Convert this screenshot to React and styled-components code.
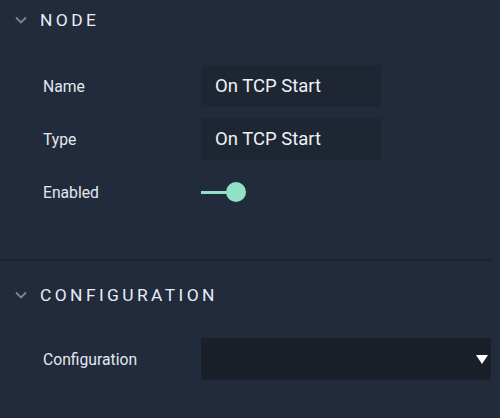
import React from 'react';
import styled, { createGlobalStyle } from 'styled-components';

const GlobalStyle = createGlobalStyle`
  html, body {
    margin: 0;
    padding: 0;
    background: #222b3b;
  }
  body {
    font-family: Roboto, "Noto Sans", sans-serif;
    width: 500px;
    height: 418px;
    overflow: hidden;
  }
`;

const Panel = styled.div`
  width: 500px;
  height: 418px;
  background: #222b3b;
  color: #e3e8ef;
`;

const Section = styled.section`
  padding-top: ${p => p.top || 0}px;
  padding-bottom: ${p => p.bottom || 0}px;
`;

const Header = styled.div`
  display: flex;
  align-items: center;
  height: 40px;
  padding-left: 15px;
  gap: 13px;
`;

const Title = styled.span`
  font-size: 17.4px;
  font-weight: 400;
  letter-spacing: 3.4px;
  color: #e6edf7;
  text-transform: uppercase;
`;

const Body = styled.div`
  display: flex;
  flex-direction: column;
  gap: 11px;
  padding-top: ${p => p.top}px;
`;

const Row = styled.div`
  display: grid;
  grid-template-columns: 158px ${p => p.wide ? '290px' : '180px'};
  align-items: center;
  height: 42px;
  padding-left: 43px;
`;

const Label = styled.span`
  font-size: 15.7px;
  color: #e3e8ef;
  padding-top: 1px;
`;

const Field = styled.div`
  height: 42px;
  display: flex;
  align-items: center;
  padding-left: 14px;
  box-sizing: border-box;
  background: #1e2533;
  font-size: 18.5px;
  color: #eef2f7;
  border-radius: 1px;
`;

const Select = styled.div`
  height: 42px;
  display: flex;
  align-items: center;
  justify-content: flex-end;
  padding-right: 3px;
  box-sizing: border-box;
  background: #1a1f29;
  border-radius: 2px;
`;

const Toggle = styled.div`
  position: relative;
  width: 46px;
  height: 20px;
`;

const Track = styled.div`
  position: absolute;
  left: 0;
  top: 9px;
  width: 30px;
  height: 3px;
  background: #8de2c3;
`;

const Knob = styled.div`
  position: absolute;
  left: 25px;
  top: 0;
  width: 20px;
  height: 20px;
  border-radius: 50%;
  background: #8fe3c4;
`;

const Divider = styled.hr`
  margin: 0;
  border: 0;
  width: 491px;
  height: 2px;
  background: #1d2431;
`;

const Chevron = () => (
  <svg width="12" height="8" viewBox="0 0 12 8">
    <polyline points="1,1.5 6,6.5 11,1.5" fill="none" stroke="#7d8594" strokeWidth="1.8" />
  </svg>
);

const Caret = () => (
  <svg width="12" height="9" viewBox="0 0 12 9">
    <polygon points="0,0 12,0 6,9" fill="#ffffff" />
  </svg>
);

export default function App() {
  return (
    <Panel>
      <GlobalStyle />
      <Section bottom={46}>
        <Header>
          <Chevron />
          <Title>Node</Title>
        </Header>
        <Body top={25}>
          <Row>
            <Label>Name</Label>
            <Field>On TCP Start</Field>
          </Row>
          <Row>
            <Label>Type</Label>
            <Field>On TCP Start</Field>
          </Row>
          <Row>
            <Label>Enabled</Label>
            <Toggle>
              <Track />
              <Knob />
            </Toggle>
          </Row>
        </Body>
      </Section>
      <Divider />
      <Section top={14}>
        <Header>
          <Chevron />
          <Title>Configuration</Title>
        </Header>
        <Body top={23}>
          <Row wide>
            <Label>Configuration</Label>
            <Select>
              <Caret />
            </Select>
          </Row>
        </Body>
      </Section>
    </Panel>
  );
}
